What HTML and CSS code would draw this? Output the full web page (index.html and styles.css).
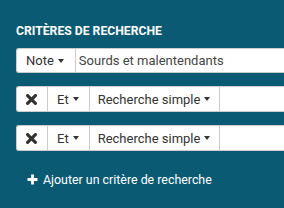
FILE: index.html
```html
<!DOCTYPE html>
<html lang="fr">
<head>
<meta charset="utf-8">
<link rel="stylesheet" href="styles.css">
</head>
<body>
<div class="panel">
  <h2 class="title">Critères de recherche</h2>
  <div class="row row-first">
    <button class="btn btn-left btn-note">Note<span class="caret"></span></button>
    <div class="input">Sourds et malentendants</div>
  </div>
  <div class="row">
    <button class="btn btn-left btn-x">
      <svg width="11" height="11" viewBox="0 0 11 11"><path d="M1.6 1.6 L9.4 9.4 M9.4 1.6 L1.6 9.4" stroke="#333" stroke-width="3.2" stroke-linecap="round"/></svg>
    </button>
    <button class="btn btn-et">Et<span class="caret"></span></button>
    <button class="btn btn-mode">Recherche simple<span class="caret"></span></button>
    <div class="input"></div>
  </div>
  <div class="row">
    <button class="btn btn-left btn-x">
      <svg width="11" height="11" viewBox="0 0 11 11"><path d="M1.6 1.6 L9.4 9.4 M9.4 1.6 L1.6 9.4" stroke="#333" stroke-width="3.2" stroke-linecap="round"/></svg>
    </button>
    <button class="btn btn-et">Et<span class="caret"></span></button>
    <button class="btn btn-mode">Recherche simple<span class="caret"></span></button>
    <div class="input"></div>
  </div>
  <div class="add">
    <svg class="plus" width="11" height="11" viewBox="0 0 11 11"><path d="M5.5 0.5 V10.5 M0.5 5.5 H10.5" stroke="#fff" stroke-width="2.8"/></svg>
    <span>Ajouter un critère de recherche</span>
  </div>
</div>
</body>
</html>
```
FILE: styles.css
```css
html, body {
  margin: 0;
  padding: 0;
  background: #0b5a73;
  overflow: hidden;
}
body {
  width: 284px;
  height: 208px;
  font-family: Roboto, "Liberation Sans", sans-serif;
}
.panel {
  padding: 24px 0 0 16px;
}
.title {
  margin: 0;
  color: #fff;
  font-size: 12.2px;
  font-weight: 700;
  text-transform: uppercase;
  line-height: 14px;
  letter-spacing: 0;
}
.row {
  display: flex;
  height: 26px;
  margin-top: 13px;
}
.row-first {
  margin-top: 10px;
  height: 25px;
}
.btn {
  display: flex;
  align-items: center;
  background: #fff;
  border: 1px solid #ccc;
  border-right: none;
  margin: 0;
  padding: 0 10px 0 9px;
  font-family: inherit;
  font-size: 13px;
  color: #333;
  white-space: nowrap;
}
.btn-left {
  border-radius: 3px 0 0 3px;
}
.btn-note {
  padding: 0 11px 0 9px;
}
.btn-x {
  padding: 0 10px 0 9px;
}
.btn-et {
  padding: 0 10px 0 9px;
}
.btn-mode {
  padding: 0 9px 0 8px;
}
.caret {
  display: inline-block;
  width: 0;
  height: 0;
  margin-left: 4px;
  border-top: 4px solid #333;
  border-left: 3.5px solid transparent;
  border-right: 3.5px solid transparent;
}
.input {
  flex: 1;
  display: flex;
  align-items: center;
  background: #fff;
  border: 1px solid #ccc;
  border-right: none;
  padding: 0 3px;
  font-size: 13px;
  color: #444;
  white-space: nowrap;
}
.add {
  display: flex;
  align-items: center;
  margin-top: 21px;
  padding-left: 11px;
  color: #fff;
  font-size: 12.4px;
}
.plus {
  margin-right: 5px;
}
```
